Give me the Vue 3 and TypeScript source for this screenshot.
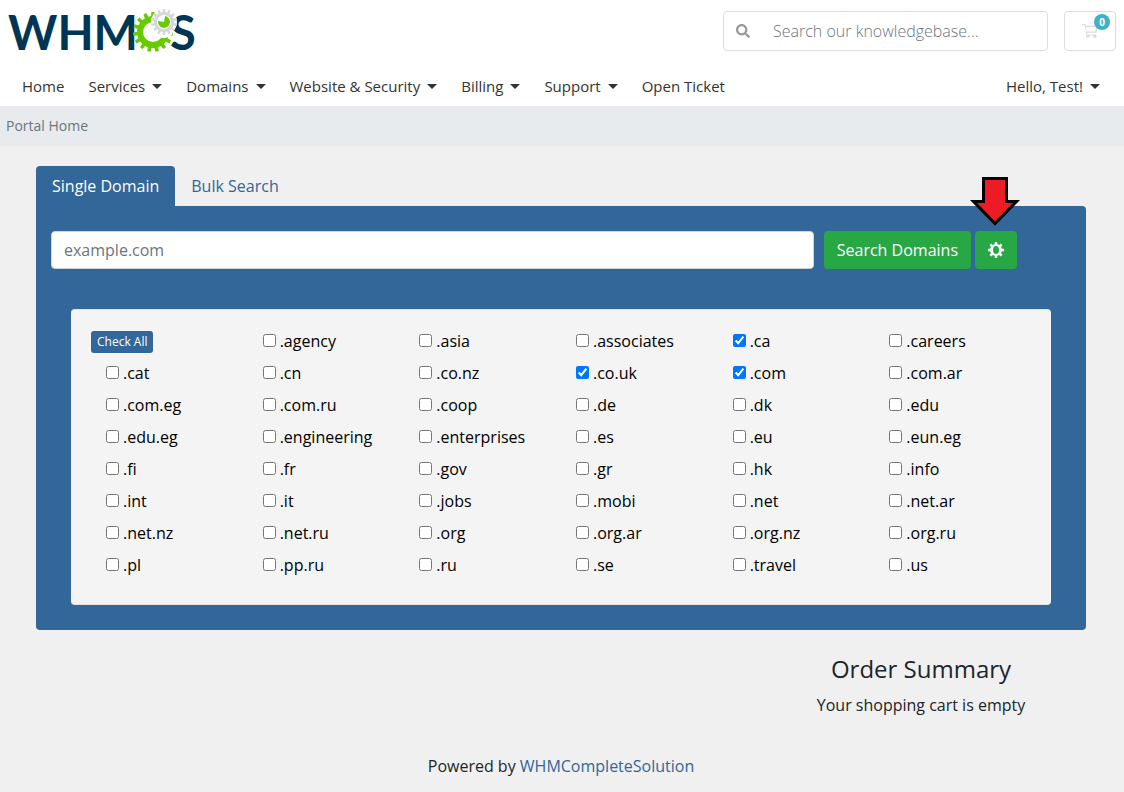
<script setup lang="ts">
import { ref } from 'vue'

interface MenuItem {
  label: string
  dropdown: boolean
}

const menu: MenuItem[] = [
  { label: 'Home', dropdown: false },
  { label: 'Services', dropdown: true },
  { label: 'Domains', dropdown: true },
  { label: 'Website & Security', dropdown: true },
  { label: 'Billing', dropdown: true },
  { label: 'Support', dropdown: true },
  { label: 'Open Ticket', dropdown: false },
]

const tlds: string[] = [
  '.agency', '.asia', '.associates', '.ca', '.careers',
  '.cat', '.cn', '.co.nz', '.co.uk', '.com', '.com.ar',
  '.com.eg', '.com.ru', '.coop', '.de', '.dk', '.edu',
  '.edu.eg', '.engineering', '.enterprises', '.es', '.eu', '.eun.eg',
  '.fi', '.fr', '.gov', '.gr', '.hk', '.info',
  '.int', '.it', '.jobs', '.mobi', '.net', '.net.ar',
  '.net.nz', '.net.ru', '.org', '.org.ar', '.org.nz', '.org.ru',
  '.pl', '.pp.ru', '.ru', '.se', '.travel', '.us',
]

const selected = ref<string[]>(['.ca', '.co.uk', '.com'])
const domain = ref('')
const query = ref('')
const tab = ref<'single' | 'bulk'>('single')

function checkAll(): void {
  selected.value = [...tlds]
}

// Closed outline of a toothed wheel centred on (cx, cy).
function gear(cx: number, cy: number, outer: number, root: number, teeth: number): string {
  const step = (Math.PI * 2) / teeth
  const pts: string[] = []
  for (let i = 0; i < teeth; i++) {
    const a = i * step - Math.PI / 2
    const corners: [number, number][] = [
      [root, -0.28], [outer, -0.2], [outer, 0.2], [root, 0.28],
    ]
    for (const [r, o] of corners) {
      const t = a + o * step
      pts.push(`${(cx + r * Math.cos(t)).toFixed(2)} ${(cy + r * Math.sin(t)).toFixed(2)}`)
    }
  }
  return `M${pts.join('L')}Z`
}

const bigGear = gear(153, 32, 20, 16, 15)
const smallGear = gear(164, 22, 13, 10, 14)
const cog = gear(8, 8, 8, 6, 8) + 'M8 4A3 4 0 0 0 8 12A3 4 0 0 0 8 4Z'
</script>

<template>
  <div class="page">
    <header class="header">
      <div class="topbar">
        <a href="#" class="brand" aria-label="WHMCS">
          <svg class="logo" width="200" height="66" viewBox="0 0 200 66">
            <text class="word" x="8" y="50">WHM</text>
            <text class="word" x="170" y="50">S</text>
            <path :d="bigGear" fill="#6c0" />
            <circle cx="153" cy="32" r="10" fill="#fff" />
            <path d="M154 38H166L172 35L174 26H158Z" fill="#fff" />
            <circle cx="164" cy="22" r="13" fill="#fff" />
            <path :d="smallGear" fill="#d5d7d8" />
            <circle cx="164" cy="22" r="7" fill="#fff" />
            <path d="M164 22L165 16A6 6 0 1 1 158 21Z" fill="#6c0" />
          </svg>
        </a>
        <div class="tools">
          <form class="search" role="search" @submit.prevent>
            <button type="submit" class="search-btn" aria-label="Search">
              <svg width="14" height="14" viewBox="0 0 512 512"><path fill="#999" d="M505 442.7L405.3 343c-4.5-4.5-10.6-7-17-7H372c27.6-35.3 44-79.7 44-128C416 93.1 322.9 0 208 0S0 93.1 0 208s93.1 208 208 208c48.3 0 92.7-16.4 128-44v16.3c0 6.4 2.5 12.5 7 17l99.7 99.7c9.4 9.4 24.6 9.4 33.9 0l28.3-28.3c9.4-9.4 9.4-24.6.1-34zM208 336c-70.7 0-128-57.2-128-128 0-70.7 57.2-128 128-128 70.7 0 128 57.2 128 128 0 70.7-57.2 128-128 128z" /></svg>
            </button>
            <input v-model="query" type="search" placeholder="Search our knowledgebase..." aria-label="Search our knowledgebase">
          </form>
          <a href="#" class="cart" aria-label="Shopping cart">
            <svg width="16" height="14" viewBox="0 0 576 512"><path fill="#ddd" fill-rule="evenodd" d="M552 64H144.300l-8.700-44.600C133.400 8.100 123.500 0 112 0H12C5.400 0 0 5.400 0 12v24c0 6.600 5.400 12 12 12h80.200l69.600 355.700C150.800 415.200 144 430.800 144 448c0 35.300 28.700 64 64 64s64-28.700 64-64a63.700 63.700 0 0 0-8.600-32h145.200a63.700 63.700 0 0 0-8.600 32c0 35.300 28.700 64 64 64s64-28.700 64-64c0-18-7.400-34.200-19.400-45.900C506 391.900 496.800 384 485.300 384H189.300l-12.500-64h331.300c11.400 0 21.200-8 23.500-19.100l43.300-208C578.600 78 567.200 64 552 64zM513 112l-33.300 160H167.400l-31.300-160z" /></svg>
            <span class="badge">0</span>
          </a>
        </div>
      </div>
      <nav class="menu" aria-label="Main">
        <a v-for="item in menu" :key="item.label" href="#" class="menu-link" :class="{ dropdown: item.dropdown }">{{ item.label }}</a>
        <a href="#" class="menu-link dropdown account">Hello, Test!</a>
      </nav>
    </header>

    <nav class="breadcrumb" aria-label="Breadcrumb">Portal Home</nav>

    <main class="content">
      <div class="tabs" role="tablist">
        <button type="button" role="tab" class="tab" :class="{ active: tab === 'single' }" :aria-selected="tab === 'single'" @click="tab = 'single'">Single Domain</button>
        <button type="button" role="tab" class="tab" :class="{ active: tab === 'bulk' }" :aria-selected="tab === 'bulk'" @click="tab = 'bulk'">Bulk Search</button>
      </div>
      <section class="panel">
        <form class="lookup" @submit.prevent>
          <input v-model="domain" class="domain" type="text" placeholder="example.com" aria-label="Domain name">
          <button type="submit" class="green">Search Domains</button>
          <button type="button" class="green" aria-label="Filter extensions">
            <svg class="cog" width="16" height="16" viewBox="0 0 16 16"><path fill="#fff" fill-rule="evenodd" :d="cog" /></svg>
            <svg class="arrow" width="50" height="52" viewBox="0 0 50 52"><path d="M13.500 3.500H36.500V26.500H46.500L25 48.500L3.500 26.500H13.500Z" fill="#ed1c24" stroke="#000" stroke-width="3" /></svg>
          </button>
        </form>
        <div class="extensions">
          <div class="cell-action"><button type="button" class="check-all" @click="checkAll">Check All</button></div>
          <label v-for="tld in tlds" :key="tld" class="ext"><input v-model="selected" type="checkbox" :value="tld">{{ tld }}</label>
        </div>
      </section>
      <aside class="summary">
        <h2>Order Summary</h2>
        <p>Your shopping cart is empty</p>
      </aside>
      <footer class="footer">Powered by <a href="#">WHMCompleteSolution</a></footer>
    </main>
  </div>
</template>

<style>
body {
  margin: 0;
  background: #f0f0f0;
}
</style>

<style scoped>
.page,
.page button,
.page input {
  font-family: "Open Sans", "Noto Sans", sans-serif;
  font-size: 16px;
}

.page {
  color: #212529;
  line-height: 24px;
}

.page * {
  box-sizing: border-box;
}

.page a {
  color: #369;
  text-decoration: none;
}

.page button {
  border: 0;
  margin: 0;
  line-height: 24px;
  cursor: pointer;
}

.header {
  background: #fff;
}

.topbar {
  display: flex;
  justify-content: space-between;
  align-items: flex-start;
  padding-right: 8px;
}

.logo {
  display: block;
}

.word {
  font: bold 47px Lato, "Open Sans", sans-serif;
  fill: #003553;
}

.tools {
  display: flex;
  gap: 16px;
  padding-top: 11px;
}

.search {
  display: flex;
  width: 325px;
  height: 40px;
  border: 1px solid #ddd;
  border-radius: 4px;
}

.search-btn {
  width: 37px;
  padding: 2px 0 0;
  background: none;
}

.search input {
  flex: 1;
  min-width: 0;
  padding: 0 12px;
  border: 0;
  outline: 0;
  background: none;
  font-weight: 300;
  appearance: none;
}

.page input::placeholder {
  color: #6c757d;
  opacity: 1;
}

.cart {
  position: relative;
  display: flex;
  align-items: center;
  justify-content: center;
  width: 52px;
  height: 40px;
  border: 1px solid #ddd;
  border-radius: 4px;
}

.badge {
  position: absolute;
  top: 2px;
  right: 5px;
  width: 16px;
  height: 16px;
  border-radius: 8px;
  background: #41b1c4;
  color: #fff;
  font-size: 10px;
  font-weight: 700;
  line-height: 16px;
  text-align: center;
}

.menu {
  display: flex;
  gap: 24px;
  height: 40px;
  padding: 0 24px 0 22px;
  line-height: 40px;
}

.page .menu-link {
  color: #333;
  font-size: 15px;
}

.dropdown::after {
  content: "";
  display: inline-block;
  margin-left: 7px;
  border: 5px solid transparent;
  border-top-color: #333;
  border-bottom: 0;
  vertical-align: 3px;
}

.account {
  margin-left: auto;
}

.breadcrumb {
  padding: 0 6px;
  background: #e7ebee;
  color: #6c757d;
  font-size: 14px;
  line-height: 40px;
}

.content {
  padding: 20px 38px 14px 36px;
}

.tabs {
  display: flex;
}

.page .tab {
  padding: 8px 16px;
  border-radius: 4px 4px 0 0;
  background: none;
  color: #369;
}

.page .tab.active {
  background: #369;
  color: #fff;
}

.panel {
  padding: 25px 35px 25px 15px;
  border-radius: 0 4px 4px 4px;
  background: #369;
}

.lookup {
  display: flex;
  gap: 4px;
  padding-right: 34px;
}

.domain {
  flex: 1;
  min-width: 0;
  height: 38px;
  margin-right: 6px;
  padding: 0 12px;
  border: 1px solid #ced4da;
  border-radius: 4px;
  background: #fff;
}

.green {
  position: relative;
  height: 38px;
  padding: 0 13px;
  border-radius: 4px;
  background: #28a745;
  color: #fff;
}

.cog {
  display: block;
}

.arrow {
  position: absolute;
  bottom: 42px;
  left: -5px;
}

.extensions {
  display: grid;
  grid-template-columns: repeat(6, 1fr);
  margin: 40px 0 0 20px;
  padding: 16px 20px 24px;
  border: 1px solid #e3e3e3;
  border-width: 1px 0;
  padding: 15px 20px 23px;
  border-radius: 4px;
  background: #f4f4f4;
  color: #000;
}

.ext {
  display: flex;
  align-items: center;
  gap: 4px;
  height: 32px;
  padding-left: 15px;
}

.ext input {
  width: 13px;
  height: 13px;
  margin: 0 0 2px;
}

.cell-action {
  display: flex;
  align-items: flex-end;
  padding-bottom: 4px;
}

.page .check-all {
  padding: 0 6px;
  border-radius: 3px;
  background: #369;
  color: #fff;
  font-size: 12px;
  line-height: 22px;
}

.summary {
  width: calc((100% + 30px) / 3 - 30px);
  margin: 23px 0 0 auto;
  text-align: center;
}

.summary h2 {
  margin: 0 0 8px;
  font-size: 24px;
  font-weight: 400;
  line-height: 32px;
}

.summary p {
  margin: 0;
}

.footer {
  margin-top: 37px;
  text-align: center;
}
</style>
